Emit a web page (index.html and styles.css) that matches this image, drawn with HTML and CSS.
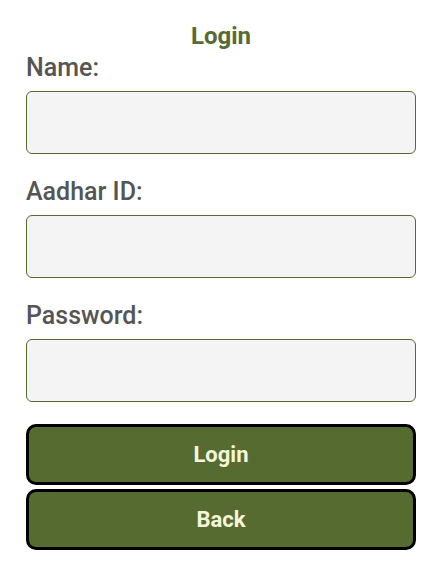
FILE: index.html
```html
<!DOCTYPE html>
<html lang="en">
<head>
<meta charset="utf-8">
<title>Login</title>
<link rel="stylesheet" href="styles.css">
</head>
<body>
<main class="page">
  <h2 class="title">Login</h2>
  <form class="form">
    <label class="field">
      <span class="label">Name:</span>
      <input class="input" type="text">
    </label>
    <label class="field">
      <span class="label">Aadhar ID:</span>
      <input class="input" type="text">
    </label>
    <label class="field">
      <span class="label">Password:</span>
      <input class="input" type="password">
    </label>
    <div class="actions">
      <button class="btn" type="button">Login</button>
      <button class="btn" type="button">Back</button>
    </div>
  </form>
</main>
</body>
</html>
```
FILE: styles.css
```css
html, body {
  margin: 0;
  padding: 0;
  background: #ffffff;
}
body {
  font-family: Roboto, "Liberation Sans", Arial, sans-serif;
}
.page {
  padding: 22px 29px 0 26px;
}
.title {
  margin: 0 0 3px;
  text-align: center;
  font-size: 24px;
  line-height: 28px;
  font-weight: bold;
  color: #556b2f;
}
.form {
  display: flex;
  flex-direction: column;
}
.field {
  display: flex;
  flex-direction: column;
  gap: 9px;
  margin-bottom: 23px;
}
.field:last-of-type {
  margin-bottom: 22px;
}
.label {
  padding-top: 1px;
  font-size: 25px;
  line-height: 28px;
  font-weight: 500;
  color: #555555;
}
.input {
  box-sizing: border-box;
  width: 100%;
  height: 63px;
  margin: 0;
  border: 1px solid #556b2f;
  border-radius: 6px;
  background: #f4f4f4;
  outline: none;
}
.actions {
  display: flex;
  flex-direction: column;
  gap: 4px;
}
.btn {
  box-sizing: border-box;
  width: 100%;
  height: 61px;
  margin: 0;
  border: 3px solid #000000;
  border-radius: 10px;
  background: #556b2f;
  color: #f5f5dc;
  font-family: Roboto, "Liberation Sans", Arial, sans-serif;
  font-size: 22px;
  font-weight: bold;
}
```
